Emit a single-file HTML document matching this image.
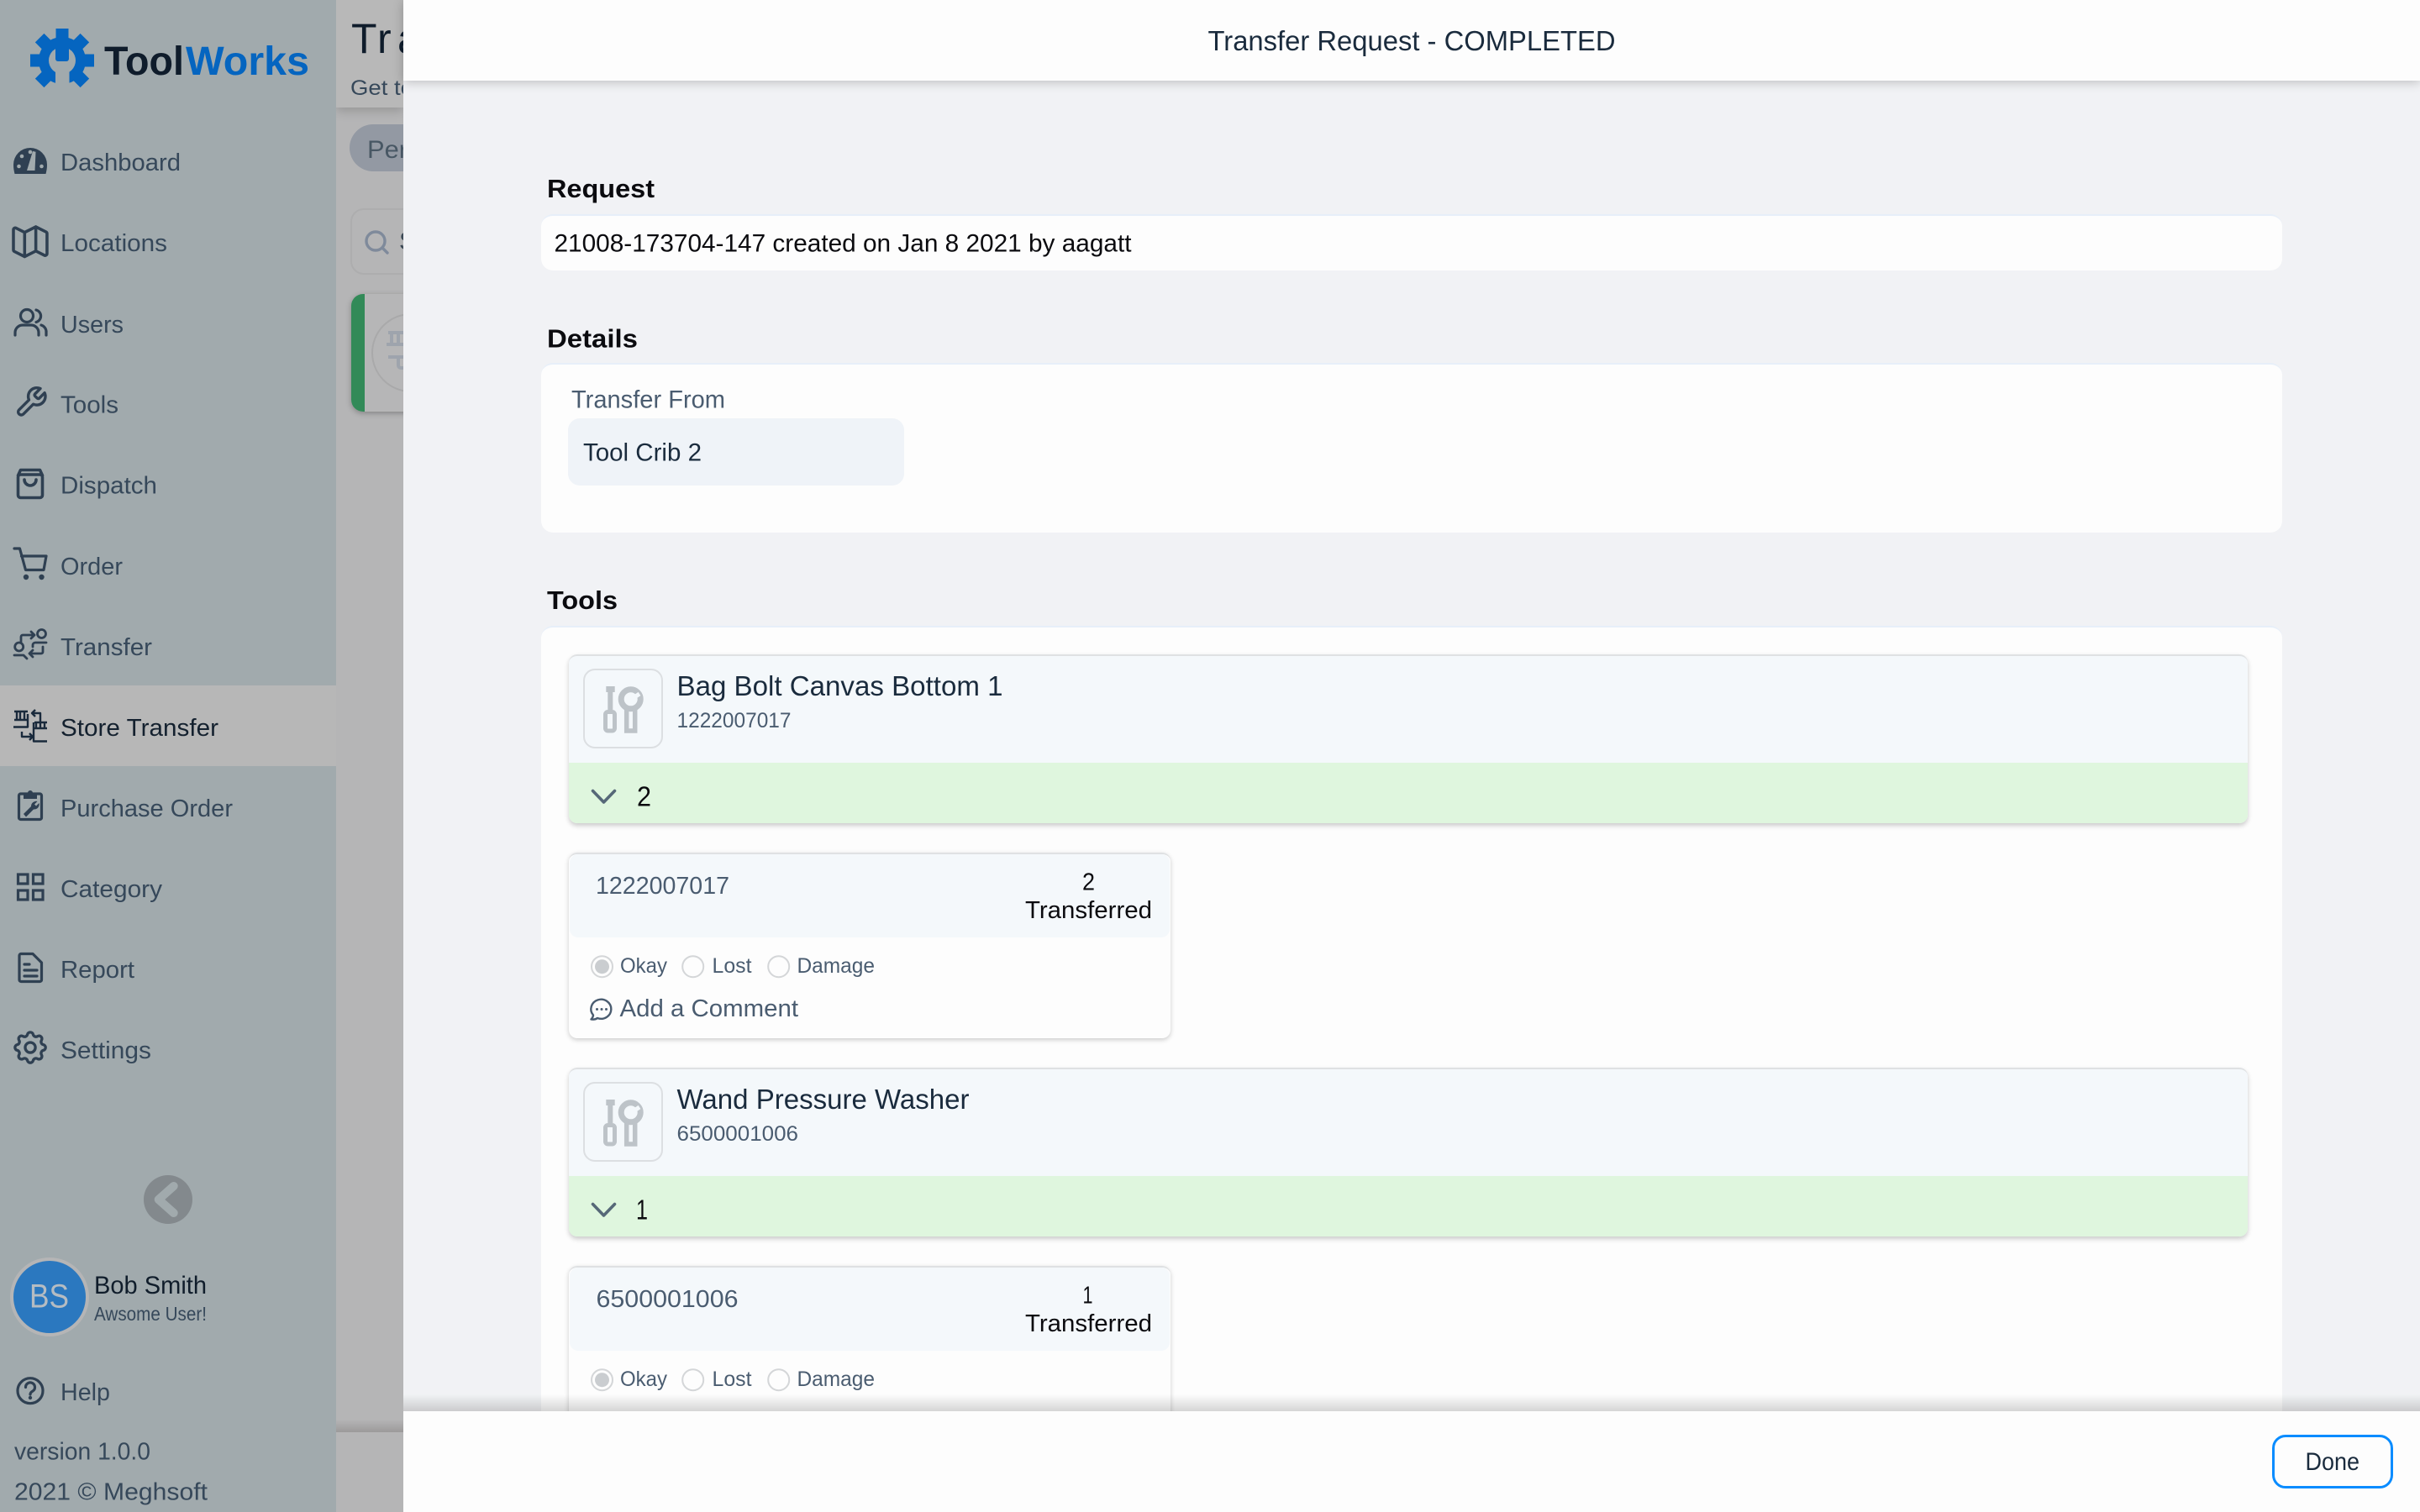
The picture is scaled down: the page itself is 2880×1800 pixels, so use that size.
<!DOCTYPE html>
<html lang="en"><head><meta charset="utf-8"><title>Transfer Request</title>
<style>
html,body{margin:0;padding:0;width:2880px;height:1800px;overflow:hidden;background:#b5b5b6}
div{position:absolute;box-sizing:border-box}
svg{position:absolute;left:0;top:0}
text{font-family:"Liberation Sans",sans-serif;white-space:pre}
.n{font-size:29px;fill:#36485a}
.g{fill:#4a5c70}
.d{fill:#1a2b3d}
.k{fill:#0b0b0f}
.i{fill:none;stroke:#2f4052;stroke-width:3.6;stroke-linecap:round;stroke-linejoin:round}
.card{left:677px;width:1998px;height:201px;background:#f4f8fb;border-top:2px solid #dfe1e3;border-radius:10px;box-shadow:0 3px 6px rgba(0,0,0,.2);overflow:hidden}
.band{left:0;right:0;bottom:0;height:72px;background:#dff6de}
.ib{left:694px;width:95px;height:95px;border:2px solid #dcdfe2;border-radius:14px}
.sub{left:677px;width:716px;height:221px;background:#fdfdfd;border-top:2px solid #dfe1e3;border-radius:10px;box-shadow:0 2px 6px rgba(0,0,0,.2)}
.subh{left:1px;right:1px;top:0;height:99px;background:#f4f8fb;border-radius:10px}
</style></head><body>
<div style="left:400px;top:0;width:80px;height:1800px;background:#b5b5b6"></div>
<div style="left:400px;top:0;width:80px;height:128px;background:#b8b8b8;box-shadow:0 4px 12px rgba(0,0,0,.18)"></div>
<div style="left:416px;top:148px;width:120px;height:56px;border-radius:28px;background:#9399a3"></div>
<div style="left:417px;top:248px;width:120px;height:79px;border:2px solid #adadae;border-radius:16px"></div>
<div style="left:418px;top:350px;width:120px;height:140px;border-radius:14px;background:#b6b6b7;box-shadow:0 2px 7px rgba(0,0,0,.28);overflow:hidden"><div style="left:0;top:0;width:16px;height:140px;background:#328a58"></div><div style="left:24px;top:23px;width:94px;height:94px;border:2px solid #a9a9aa;border-radius:50%"></div></div>
<div style="left:400px;top:1690px;width:80px;height:15px;background:linear-gradient(#b5b5b6,#9c9a9a)"></div>
<div style="left:0;top:0;width:400px;height:1800px;background:#a1aaad"></div>
<div style="left:0;top:816px;width:400px;height:96px;background:#b7b7b7"></div>

<div style="left:480px;top:0;width:2400px;height:1800px;background:#f1f2f5"></div>
<div style="left:644px;top:255px;width:2072px;height:67px;background:#fdfdfd;border-top:2px solid #e7eff9;border-radius:14px"></div>
<div style="left:644px;top:432px;width:2072px;height:202px;background:#fdfdfd;border-top:2px solid #e7eff9;border-radius:14px"></div>
<div style="left:676px;top:498px;width:400px;height:80px;background:#eff3f8;border-radius:14px"></div>
<div style="left:644px;top:745px;width:2072px;height:1000px;background:#fdfdfd;border-top:2px solid #e7eff9;border-radius:14px"></div>

<div class="card" style="top:779px"><div class="band"></div></div>
<div class="ib" style="top:796px"></div>
<div class="sub" style="top:1015px"><div class="subh"></div></div>
<div class="card" style="top:1271px"><div class="band"></div></div>
<div class="ib" style="top:1288px"></div>
<div class="sub" style="top:1507px"><div class="subh"></div></div>

<div style="left:480px;top:0;width:2400px;height:96px;background:#fdfdfd;box-shadow:0 2px 12px rgba(0,0,0,.22)"></div>
<div style="left:480px;top:1660px;width:2400px;height:20px;background:linear-gradient(rgba(0,0,0,0),rgba(0,0,0,.16))"></div>
<div style="left:480px;top:1680px;width:2400px;height:120px;background:#fdfdfd"></div>
<div style="left:2704px;top:1708px;width:144px;height:64px;border:3px solid #0a8cff;border-radius:16px"></div>

<svg width="2880" height="1800" viewBox="0 0 2880 1800" xmlns="http://www.w3.org/2000/svg">
<defs>
<clipPath id="mc"><rect x="400" y="0" width="80" height="1800"/></clipPath>
<g id="tool">
  <path fill="#bdc3c8" d="M721.3 817h10.400v7h-2.400v21h-6v-21h-2z"/>
  <rect x="720.500" y="847.500" width="11" height="22.500" rx="3" fill="none" stroke="#bdc3c8" stroke-width="5"/>
  <circle cx="750.700" cy="832.300" r="11.500" fill="none" stroke="#bdc3c8" stroke-width="7"/>
  <path d="M745.700 842V870h10V842" fill="none" stroke="#bdc3c8" stroke-width="5.500"/>
  <path fill="none" stroke="#f4f8fb" stroke-width="5" d="M752 832l9-6"/>
</g>
</defs>

<!-- logo -->
<g fill="#0565c0">
  <circle cx="74" cy="72" r="28"/>
  <rect x="66.500" y="34" width="15" height="20"/>
  <rect x="36" y="64.500" width="20" height="15"/>
  <rect x="92" y="64.500" width="20" height="15"/>
  <g transform="rotate(45 74 72)"><rect x="66.500" y="34" width="15" height="20"/><rect x="36" y="64.500" width="20" height="15"/><rect x="92" y="64.500" width="20" height="15"/><rect x="66.500" y="90" width="15" height="20"/></g>
</g>
<circle cx="74" cy="72" r="16" fill="#a1aaad"/>
<rect x="66" y="84" width="16.500" height="22" fill="#a1aaad"/>
<path fill="#0565c0" d="M66 54h16v16a3 3 0 0 1-3 3H69a3 3 0 0 1-3-3z"/>
<text x="124" y="89" font-size="48" font-weight="700" fill="#0f1c2b" textLength="95" lengthAdjust="spacingAndGlyphs">Tool</text>
<text x="221" y="89" font-size="48" font-weight="700" fill="#0565c0" textLength="147" lengthAdjust="spacingAndGlyphs">Works</text>

<!-- nav -->
<text class="n" x="72" y="203" textLength="143" lengthAdjust="spacingAndGlyphs">Dashboard</text>
<text class="n" x="72" y="299" textLength="127" lengthAdjust="spacingAndGlyphs">Locations</text>
<text class="n" x="72" y="396" textLength="75" lengthAdjust="spacingAndGlyphs">Users</text>
<text class="n" x="72" y="491.500" textLength="69" lengthAdjust="spacingAndGlyphs">Tools</text>
<text class="n" x="72" y="587.500" textLength="115" lengthAdjust="spacingAndGlyphs">Dispatch</text>
<text class="n" x="72" y="684" textLength="74" lengthAdjust="spacingAndGlyphs">Order</text>
<text class="n" x="72" y="780" textLength="109" lengthAdjust="spacingAndGlyphs">Transfer</text>
<text class="n" x="72" y="876" textLength="188" lengthAdjust="spacingAndGlyphs" style="fill:#14212f">Store Transfer</text>
<text class="n" x="72" y="972" textLength="205" lengthAdjust="spacingAndGlyphs">Purchase Order</text>
<text class="n" x="72" y="1068" textLength="121" lengthAdjust="spacingAndGlyphs">Category</text>
<text class="n" x="72" y="1164" textLength="88" lengthAdjust="spacingAndGlyphs">Report</text>
<text class="n" x="72" y="1260" textLength="108" lengthAdjust="spacingAndGlyphs">Settings</text>
<text class="n" x="72" y="1667" textLength="59" lengthAdjust="spacingAndGlyphs">Help</text>
<text class="n" x="17" y="1737.500" textLength="162" lengthAdjust="spacingAndGlyphs">version 1.0.0</text>
<text class="n" x="17" y="1785.500" textLength="230" lengthAdjust="spacingAndGlyphs">2021 © Meghsoft</text>

<!-- nav icons -->
<path fill="#2f4052" d="M17.500 207C16.500 203 16 200 16 196A20 20 0 0 1 56 196C56 200 55.500 203 54.500 207z"/>
<g fill="#a1aaad"><circle cx="22.500" cy="198" r="2.300"/><circle cx="26" cy="186" r="2.300"/><circle cx="36" cy="181" r="2.300"/><circle cx="49.500" cy="198" r="2.300"/><path d="M32 203l7-23 3.500.7-1 22.300z"/></g>
<g transform="translate(9.33 261.1) scale(2.22)"><path fill="none" stroke="#2f4052" stroke-width="1.6" stroke-linecap="round" stroke-linejoin="round" d="M9 20l-5.447-2.724A1 1 0 013 16.382V5.618a1 1 0 011.447-.894L9 7m0 13l6-3m-6 3V7m6 10l4.553 2.276A1 1 0 0021 18.382V7.618a1 1 0 00-.553-.894L15 4m0 13V4m0 0L9 7"/></g>
<g class="i" style="stroke-width:3.200"><circle cx="32" cy="376" r="7.500"/><path d="M43 369a7.500 7.500 0 0 1 0 14.500"/><path d="M18 399v-3a9 9 0 0 1 9-9h10a9 9 0 0 1 9 9v3"/><path d="M49 387a8.500 8.500 0 0 1 6 9v3"/></g>
<g transform="translate(16.600 458.300) scale(1.700)"><path fill="none" stroke="#2f4052" stroke-width="2" stroke-linecap="round" stroke-linejoin="round" d="M14.700 6.300a1 1 0 0 0 0 1.400l1.600 1.600a1 1 0 0 0 1.400 0l3.770-3.770a6 6 0 0 1-7.940 7.940l-6.910 6.910a2.120 2.120 0 0 1-3-3l6.910-6.910a6 6 0 0 1 7.940-7.940l-3.760 3.760z"/></g>
<g class="i"><rect x="21.500" y="565" width="29" height="27.500" rx="3"/><path d="M21.500 566l3-6.500h23l3 6.500"/><path d="M29 571a7 7 0 0 0 14 0"/></g>
<g class="i" style="stroke-width:3.200"><path d="M17 653h6.500l7 25.500H52l3-16.500H25.500"/></g>
<circle cx="31" cy="687" r="3.200" fill="#2f4052"/><circle cx="49.500" cy="687" r="3.200" fill="#2f4052"/>
<g class="i" style="stroke-width:2.800"><circle cx="49.500" cy="754.500" r="5"/><circle cx="22.700" cy="770" r="5"/><path d="M25 764v-6a2 2 0 0 1 2-2h12M37 752l4 4-4 4"/><path d="M55 765H42a3 3 0 0 0-3 3v2"/><path d="M51 770v6a2 2 0 0 1-2 2H37M39 774l-4 4 4 4"/><path d="M17 780h11l4 4"/></g>
<g class="i" style="stroke:#1a2a3c;stroke-width:2.400;stroke-linecap:butt"><path d="M17 847h16M20 847v10M24 847v10M29 847v10M17 857h16"/><path d="M33 850v15.500H16"/><path d="M38 849h10v11M42 845l-4 4 4 4"/><path d="M26 871v6h12M35 873l4 4-4 4"/><path d="M41 860h15M43 860v8M48 860v8M53 860v8M40 867h16"/><path d="M40 860v22.500h16"/></g>
<g class="i" style="stroke-width:3.200"><rect x="22.500" y="945" width="27" height="30.500" rx="2"/></g>
<path fill="#2f4052" d="M28 944h5a3 3 0 0 1 6 0h5v7H28z"/>
<path fill="#2f4052" d="M28 969l9-9a6 6 0 0 1 7.500-6l-3.500 3.500 2 2 3.500-3.500a6 6 0 0 1-6.500 7.500l-9 9z"/>
<g class="i" style="stroke-linejoin:miter;stroke-width:3.200"><rect x="21.500" y="1041" width="11.500" height="11"/><rect x="39.500" y="1041" width="11.500" height="11"/><rect x="21.500" y="1060" width="11.500" height="11"/><rect x="39.500" y="1060" width="11.500" height="11"/></g>
<g class="i" style="stroke-width:3.200"><path d="M25 1135.500h14l10.500 10.500v20.500a2 2 0 0 1-2 2H25a2 2 0 0 1-2-2v-29a2 2 0 0 1 2-2z"/><path d="M29 1148h6M29 1155h15M29 1162h15"/></g>
<g transform="translate(11.800 1222.800) scale(2.020)"><path fill="none" stroke="#2f4052" stroke-width="1.650" stroke-linecap="round" stroke-linejoin="round" d="M10.325 4.317c.426-1.756 2.924-1.756 3.350 0a1.724 1.724 0 002.573 1.066c1.543-.94 3.310.826 2.370 2.370a1.724 1.724 0 001.065 2.572c1.756.426 1.756 2.924 0 3.350a1.724 1.724 0 00-1.066 2.573c.94 1.543-.826 3.310-2.370 2.370a1.724 1.724 0 00-2.572 1.065c-.426 1.756-2.924 1.756-3.350 0a1.724 1.724 0 00-2.573-1.066c-1.543.94-3.310-.826-2.370-2.370a1.724 1.724 0 00-1.065-2.572c-1.756-.426-1.756-2.924 0-3.350a1.724 1.724 0 001.066-2.573c-.94-1.543.826-3.310 2.370-2.370.996.608 2.296.07 2.572-1.065zM15 12a3 3 0 11-6 0 3 3 0 016 0z"/></g>
<g class="i" style="stroke-width:3.200"><circle cx="36" cy="1655.700" r="15"/><path d="M30.500 1651.500a5.500 5.500 0 1 1 8.500 4.500c-2 1.200-3 2.200-3 4"/></g>
<circle cx="36" cy="1664" r="2.200" fill="#2f4052"/>

<!-- collapse -->
<circle cx="200" cy="1428" r="29" fill="#83898d"/>
<path d="M206.700 1412l-18 16 18 16" fill="none" stroke="#a1aaad" stroke-width="10" stroke-linecap="round" stroke-linejoin="round"/>

<!-- user -->
<circle cx="59" cy="1544" r="45" fill="#2b78bf" stroke="#b5b5b6" stroke-width="4"/>
<text x="35" y="1556.500" font-size="40" fill="#b5bcc2" textLength="47" lengthAdjust="spacingAndGlyphs">BS</text>
<text x="112" y="1540" font-size="30" fill="#101d2b" textLength="134" lengthAdjust="spacingAndGlyphs">Bob Smith</text>
<text x="112" y="1572" font-size="23" fill="#36485a" textLength="134" lengthAdjust="spacingAndGlyphs">Awsome User!</text>

<!-- background page, clipped -->
<g clip-path="url(#mc)">
  <text x="418 449 473" y="63" font-size="50" fill="#0f1c2b">Tra</text>
  <text x="417" y="113" font-size="25" fill="#36485a" textLength="75" lengthAdjust="spacingAndGlyphs">Get to</text>
  <text x="437" y="188" font-size="30" fill="#485764" textLength="48" lengthAdjust="spacingAndGlyphs">Per</text>
  <circle cx="447" cy="287" r="11" fill="none" stroke="#7f8a9b" stroke-width="3.400"/><path d="M455 295l6 6" stroke="#7f8a9b" stroke-width="3.400" stroke-linecap="round"/>
  <text x="475" y="297" font-size="30" fill="#3d4a56">S</text>
  <path fill="none" stroke="#9ea4ad" stroke-width="4" d="M462 396h18M466 396v14M474 396v14M460 410h20M462 425h18M474 425v10a3 3 0 0 0 3 3h3"/>
</g>

<!-- modal text -->
<text x="1437.500" y="60" font-size="33" class="d" textLength="485" lengthAdjust="spacingAndGlyphs">Transfer Request - COMPLETED</text>
<text x="651" y="235" font-size="31" font-weight="700" class="k" textLength="128" lengthAdjust="spacingAndGlyphs">Request</text>
<text x="659.500" y="299.500" font-size="30" class="k" textLength="687" lengthAdjust="spacingAndGlyphs">21008-173704-147 created on Jan 8 2021 by aagatt</text>
<text x="651" y="413.500" font-size="31" font-weight="700" class="k" textLength="108" lengthAdjust="spacingAndGlyphs">Details</text>
<text x="680" y="485.500" font-size="30" class="g" textLength="183" lengthAdjust="spacingAndGlyphs">Transfer From</text>
<text x="694" y="548.500" font-size="30" class="d" textLength="141" lengthAdjust="spacingAndGlyphs">Tool Crib 2</text>
<text x="651" y="725" font-size="31" font-weight="700" class="k" textLength="84" lengthAdjust="spacingAndGlyphs">Tools</text>

<!-- item 1 -->
<use href="#tool"/>
<text x="805.500" y="828" font-size="33.500" class="d" textLength="388" lengthAdjust="spacingAndGlyphs">Bag Bolt Canvas Bottom 1</text>
<text x="805.500" y="866" font-size="25" class="g" textLength="136" lengthAdjust="spacingAndGlyphs">1222007017</text>
<path d="M705.500 941.500l13 13.500 13-13.500" fill="none" stroke="#566878" stroke-width="3.600" stroke-linecap="round" stroke-linejoin="round"/>
<text x="758" y="959.500" font-size="33" class="k" textLength="17" lengthAdjust="spacingAndGlyphs">2</text>
<text x="709" y="1064" font-size="29" class="g" textLength="159" lengthAdjust="spacingAndGlyphs">1222007017</text>
<text x="1288" y="1059.500" font-size="29" class="k" textLength="15" lengthAdjust="spacingAndGlyphs">2</text>
<text x="1220" y="1093" font-size="29" class="k" textLength="151" lengthAdjust="spacingAndGlyphs">Transferred</text>
<g fill="#fdfdfd" stroke="#d4d6d8" stroke-width="2"><circle cx="716.500" cy="1150.700" r="12.500"/><circle cx="824.700" cy="1150.700" r="12.500"/><circle cx="926.700" cy="1150.700" r="12.500"/></g>
<circle cx="716.500" cy="1150.700" r="8.500" fill="#cacdd0"/>
<text x="738" y="1158" font-size="25" class="g" textLength="56" lengthAdjust="spacingAndGlyphs">Okay</text>
<text x="847.500" y="1158" font-size="25" class="g" textLength="47" lengthAdjust="spacingAndGlyphs">Lost</text>
<text x="948.500" y="1158" font-size="25" class="g" textLength="92.500" lengthAdjust="spacingAndGlyphs">Damage</text>
<path d="M706 1208.500a12 11.500 0 1 1 5 3.500c-2 1.500-4.500 2-7.500 1.500 1.500-1.500 2.300-3 2.500-5z" fill="none" stroke="#4a5c70" stroke-width="2.400" stroke-linejoin="round"/>
<g fill="#4a5c70"><circle cx="710.500" cy="1201.500" r="1.500"/><circle cx="716" cy="1201.500" r="1.500"/><circle cx="721.500" cy="1201.500" r="1.500"/></g>
<text x="737.500" y="1210" font-size="29" class="g" textLength="212.500" lengthAdjust="spacingAndGlyphs">Add a Comment</text>

<!-- item 2 -->
<use href="#tool" y="492"/>
<text x="805.500" y="1320" font-size="33.500" class="d" textLength="348" lengthAdjust="spacingAndGlyphs">Wand Pressure Washer</text>
<text x="805.500" y="1358" font-size="25" class="g" textLength="144.500" lengthAdjust="spacingAndGlyphs">6500001006</text>
<path d="M705.500 1433.500l13 13.500 13-13.500" fill="none" stroke="#566878" stroke-width="3.600" stroke-linecap="round" stroke-linejoin="round"/>
<text x="757" y="1451.500" font-size="33" class="k" textLength="14" lengthAdjust="spacingAndGlyphs">1</text>
<text x="709.500" y="1556" font-size="29" class="g" textLength="169" lengthAdjust="spacingAndGlyphs">6500001006</text>
<text x="1288.500" y="1551.500" font-size="29" class="k" textLength="12" lengthAdjust="spacingAndGlyphs">1</text>
<text x="1220" y="1585" font-size="29" class="k" textLength="151" lengthAdjust="spacingAndGlyphs">Transferred</text>
<g fill="#fdfdfd" stroke="#d4d6d8" stroke-width="2"><circle cx="716.500" cy="1642.700" r="12.500"/><circle cx="824.700" cy="1642.700" r="12.500"/><circle cx="926.700" cy="1642.700" r="12.500"/></g>
<circle cx="716.500" cy="1642.700" r="8.500" fill="#cacdd0"/>
<text x="738" y="1650" font-size="25" class="g" textLength="56" lengthAdjust="spacingAndGlyphs">Okay</text>
<text x="847.500" y="1650" font-size="25" class="g" textLength="47" lengthAdjust="spacingAndGlyphs">Lost</text>
<text x="948.500" y="1650" font-size="25" class="g" textLength="92.500" lengthAdjust="spacingAndGlyphs">Damage</text>

<text x="2743.500" y="1750" font-size="30" class="d" textLength="64.500" lengthAdjust="spacingAndGlyphs">Done</text>
</svg>
</body></html>
